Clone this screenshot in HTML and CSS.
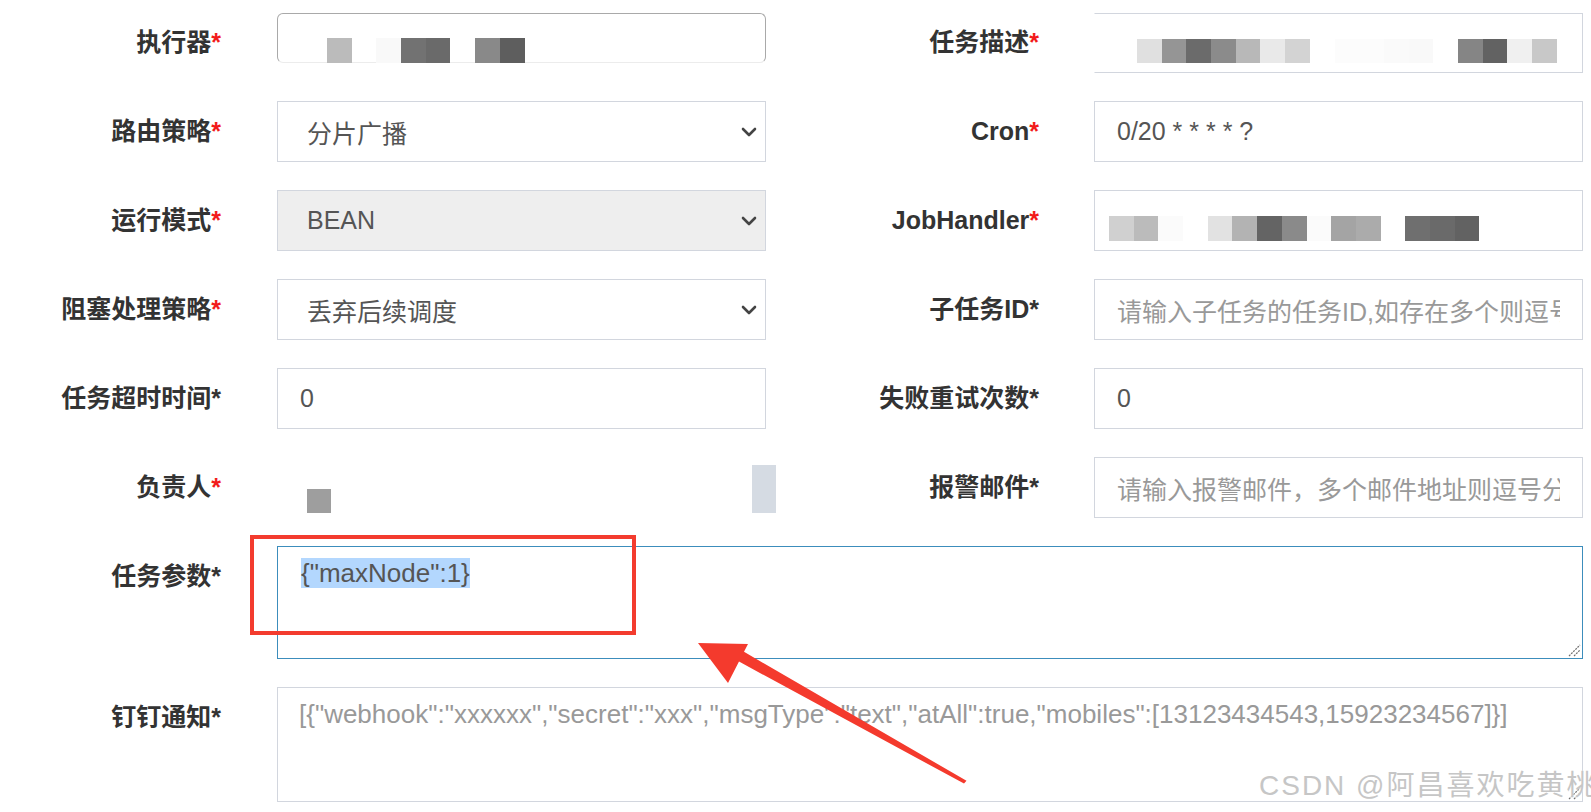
FILE: index.html
```html
<!DOCTYPE html>
<html lang="zh-CN">
<head>
<meta charset="utf-8">
<title>编辑任务</title>
<link rel="stylesheet" href="styles.css">
</head>
<body>
<div class="page">
  <form class="job-form">
    <!-- row 1 -->
    <label class="lbl">执行器<span class="req">*</span></label>
    <div class="field field-group">
      <span class="px s-bb"></span><span class="px"></span><span class="px s-f9"></span><span class="px s-72"></span><span class="px s-6a"></span><span class="px"></span><span class="px s-89"></span><span class="px s-5e"></span>
    </div>
    <label class="lbl lbl-r">任务描述<span class="req">*</span></label>
    <div class="field field-desc">
      <span class="px s-e0"></span><span class="px s-95"></span><span class="px s-6b"></span><span class="px s-8b"></span><span class="px s-b8"></span><span class="px s-e9"></span><span class="px s-d3"></span><span class="px"></span><span class="px s-fc"></span><span class="px s-fc"></span><span class="px s-fa"></span><span class="px s-f9"></span><span class="px"></span><span class="px s-85"></span><span class="px s-62"></span><span class="px s-f0"></span><span class="px s-c8"></span>
    </div>

    <!-- row 2 -->
    <label class="lbl">路由策略<span class="req">*</span></label>
    <div class="field select"><span>分片广播</span><svg class="chev" width="16" height="10" viewBox="0 0 16 10"><polyline points="2,2 8,8 14,2"/></svg></div>
    <label class="lbl lbl-r">Cron<span class="req">*</span></label>
    <div class="field">0/20 * * * * ?</div>

    <!-- row 3 -->
    <label class="lbl">运行模式<span class="req">*</span></label>
    <div class="field select disabled"><span>BEAN</span><svg class="chev" width="16" height="10" viewBox="0 0 16 10"><polyline points="2,2 8,8 14,2"/></svg></div>
    <label class="lbl lbl-r">JobHandler<span class="req">*</span></label>
    <div class="field field-handler">
      <span class="px s-d0"></span><span class="px s-bb"></span><span class="px s-fb"></span><span class="px"></span><span class="px s-e2"></span><span class="px s-b3"></span><span class="px s-64"></span><span class="px s-8a"></span><span class="px s-fb"></span><span class="px s-a4"></span><span class="px s-ab"></span><span class="px"></span><span class="px s-6f"></span><span class="px s-6a"></span><span class="px s-62"></span>
    </div>

    <!-- row 4 -->
    <label class="lbl">阻塞处理策略<span class="req">*</span></label>
    <div class="field select"><span>丢弃后续调度</span><svg class="chev" width="16" height="10" viewBox="0 0 16 10"><polyline points="2,2 8,8 14,2"/></svg></div>
    <label class="lbl lbl-r">子任务ID*</label>
    <div class="field placeholder"><span class="clip">请输入子任务的任务ID,如存在多个则逗号分隔</span></div>

    <!-- row 5 -->
    <label class="lbl">任务超时时间*</label>
    <div class="field">0</div>
    <label class="lbl lbl-r">失败重试次数*</label>
    <div class="field">0</div>

    <!-- row 6 -->
    <label class="lbl">负责人<span class="req">*</span></label>
    <div class="owner">
      <span class="owner-dot"></span>
      <span class="owner-bar"></span>
    </div>
    <label class="lbl lbl-r">报警邮件*</label>
    <div class="field placeholder"><span class="clip">请输入报警邮件，多个邮件地址则逗号分隔</span></div>

    <!-- row 7 -->
    <label class="lbl">任务参数*</label>
    <div class="area focused"><span class="sel">{"maxNode":1}</span>
      <svg class="grip" width="14" height="14" viewBox="0 0 14 14"><line x1="2" y1="13" x2="13" y2="2"/><line x1="7" y1="13" x2="13" y2="7"/></svg>
    </div>

    <!-- row 8 -->
    <label class="lbl">钉钉通知*</label>
    <div class="area placeholder">[{"webhook":"xxxxxx","secret":"xxx","msgType":"text","atAll":true,"mobiles":[13123434543,15923234567]}]
      <svg class="grip" width="14" height="14" viewBox="0 0 14 14"><line x1="2" y1="13" x2="13" y2="2"/><line x1="7" y1="13" x2="13" y2="7"/></svg>
    </div>
  </form>

  <!-- callout drawn over the form -->
  <div class="callout-box"></div>
  <svg class="callout-arrow" width="1591" height="812" viewBox="0 0 1591 812">
    <polygon points="698,643 748,644 744,651.8 966.5,780.8 964,783.6 739,661.6 728,683"/>
  </svg>

  <div class="watermark">CSDN @阿昌喜欢吃黄桃</div>
</div>
</body>
</html>
```

FILE: styles.css
```css
html, body {
  margin: 0;
  padding: 0;
  background: #fff;
  overflow: hidden;
}

.page {
  position: relative;
  width: 1591px;
  height: 812px;
  font-family: "Liberation Sans", "Noto Sans CJK SC", sans-serif;
}

.job-form {
  display: grid;
  grid-template-columns: 277px 489px 328px 489px;
  align-items: start;
  row-gap: 28px;
  padding-top: 12px;
}

/* labels */
.lbl {
  height: 61px;
  font-size: 25px;
  font-weight: 700;
  color: #333;
  text-align: right;
  line-height: 61px;
  padding-right: 56px;
  white-space: nowrap;
}
.lbl-r { padding-right: 55px; }
.req { color: #f21b1b; }

/* inputs */
.field {
  box-sizing: border-box;
  height: 61px;
  border: 1px solid #d2d6de;
  display: flex;
  align-items: center;
  padding: 0 22px;
  font-size: 25px;
  color: #555;
  white-space: nowrap;
  overflow: hidden;
}

.select { padding: 0 8px 0 29px; }
.select.disabled { background: #eee; }
.chev {
  flex: none;
  margin-left: auto;
  fill: none;
  stroke: #444;
  stroke-width: 2.6;
  stroke-linecap: round;
  stroke-linejoin: round;
}

.placeholder { color: #999; }
.clip { overflow: hidden; display: block; }

/* masked values */
.px {
  flex: none;
  width: 24.7px;
  height: 24px;
}
.field-group {
  height: 50px;
  margin-top: 1px;
  border-color: #a9a9a9;
  border-bottom-color: #ececec;
  border-radius: 6px;
  align-items: flex-start;
  padding: 24px 0 0 49px;
  overflow: visible;
}
.field-group .px { height: 25px; }
.field-desc {
  position: relative;
  margin-top: 1px;
  height: 60px;
  border-left-color: transparent;
  align-items: flex-start;
  padding: 25px 0 0 42px;
}
.field-desc::before {
  content: "";
  position: absolute;
  left: -1px;
  bottom: -1px;
  width: 1px;
  height: 12px;
  background: #d2d6de;
}
.field-handler {
  align-items: flex-start;
  padding: 25px 0 0 14px;
}
.field-handler .px { height: 25px; }

.s-bb { background: #bbb; }
.s-f9 { background: #f9f9f9; }
.s-72 { background: #727272; }
.s-6a { background: #6a6a6a; }
.s-89 { background: #898989; }
.s-5e { background: #5e5e5e; }
.s-e0 { background: #e0e0e0; }
.s-95 { background: #959595; }
.s-6b { background: #6b6b6b; }
.s-8b { background: #8b8b8b; }
.s-b8 { background: #b8b8b8; }
.s-e9 { background: #e9e9e9; }
.s-d3 { background: #d3d3d3; }
.s-fc { background: #fcfcfc; }
.s-fa { background: #fafafa; }
.s-85 { background: #858585; }
.s-62 { background: #626262; }
.s-f0 { background: #f0f0f0; }
.s-c8 { background: #c8c8c8; }
.s-d0 { background: #d0d0d0; }
.s-fb { background: #fbfbfb; }
.s-e2 { background: #e2e2e2; }
.s-b3 { background: #b3b3b3; }
.s-64 { background: #646464; }
.s-8a { background: #8a8a8a; }
.s-a4 { background: #a4a4a4; }
.s-ab { background: #ababab; }
.s-6f { background: #6f6f6f; }

/* owner picker */
.owner {
  display: flex;
  align-items: flex-start;
  height: 61px;
}
.owner-dot {
  width: 24px;
  height: 24px;
  margin: 32px 0 0 30px;
  background: #9e9e9e;
}
.owner-bar {
  width: 24px;
  height: 48px;
  margin: 8px -10px 0 auto;
  background: #d5dbe3;
}

/* text areas */
.area {
  grid-column: 2 / 5;
  position: relative;
  box-sizing: border-box;
  height: 113px;
  border: 1px solid #d2d6de;
  padding: 11px 22px 0 23px;
  font-size: 26px;
  line-height: 31px;
  color: #555;
  white-space: nowrap;
}
.area.placeholder {
  height: 115px;
  color: #999;
  padding-left: 21px;
}
.area.focused { border-color: #3c8dbc; }
.sel { background: #b3d7fe; }
.grip {
  position: absolute;
  right: 1px;
  bottom: 1px;
  stroke: #6f6f6f;
  stroke-width: 1.2;
  stroke-dasharray: 2 1;
}

/* callout */
.callout-box {
  position: absolute;
  left: 250px;
  top: 535px;
  width: 386px;
  height: 100px;
  box-sizing: border-box;
  border: 4px solid #f33b2e;
}
.callout-arrow {
  position: absolute;
  left: 0;
  top: 0;
  pointer-events: none;
}
.callout-arrow polygon { fill: #f43a2d; }

.watermark {
  position: absolute;
  left: 1259px;
  top: 763px;
  font-size: 28px;
  letter-spacing: 2px;
  color: #c6c6c6;
  white-space: nowrap;
  text-shadow: 0 0 1px #fff;
}
```
